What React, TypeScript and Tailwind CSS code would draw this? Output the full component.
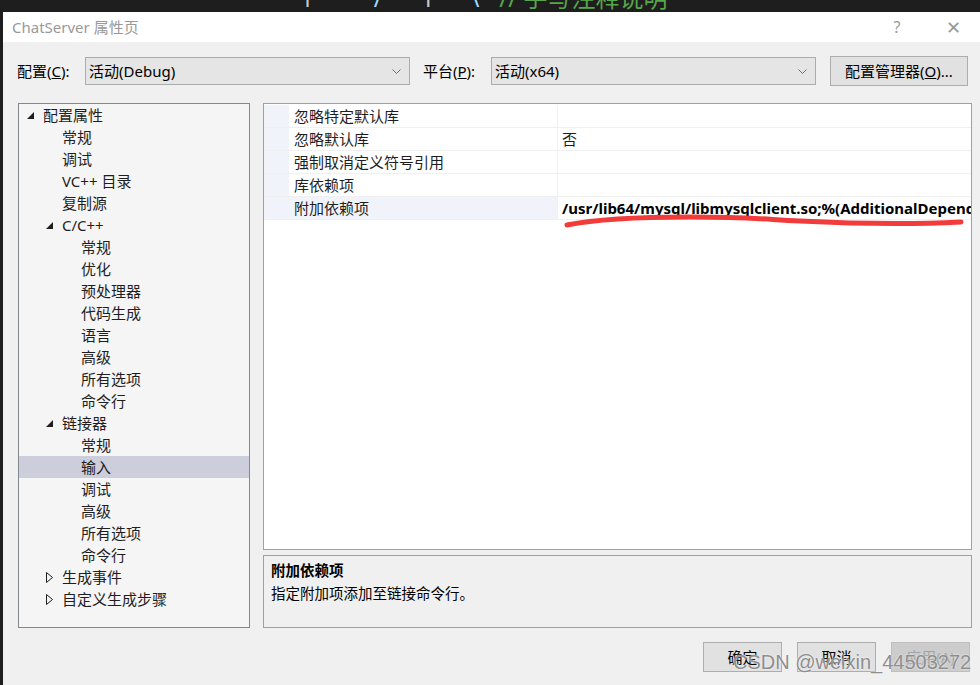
import React from "react";

type Node = { label: string; level: number; kind?: "open" | "closed"; selected?: boolean };

const tree: Node[] = [
  { label: "配置属性", level: 0, kind: "open" },
  { label: "常规", level: 1 },
  { label: "调试", level: 1 },
  { label: "VC++ 目录", level: 1 },
  { label: "复制源", level: 1 },
  { label: "C/C++", level: 1, kind: "open" },
  { label: "常规", level: 2 },
  { label: "优化", level: 2 },
  { label: "预处理器", level: 2 },
  { label: "代码生成", level: 2 },
  { label: "语言", level: 2 },
  { label: "高级", level: 2 },
  { label: "所有选项", level: 2 },
  { label: "命令行", level: 2 },
  { label: "链接器", level: 1, kind: "open" },
  { label: "常规", level: 2 },
  { label: "输入", level: 2, selected: true },
  { label: "调试", level: 2 },
  { label: "高级", level: 2 },
  { label: "所有选项", level: 2 },
  { label: "命令行", level: 2 },
  { label: "生成事件", level: 1, kind: "closed" },
  { label: "自定义生成步骤", level: 1, kind: "closed" },
];

const props = [
  { name: "忽略特定默认库", value: "" },
  { name: "忽略默认库", value: "否" },
  { name: "强制取消定义符号引用", value: "" },
  { name: "库依赖项", value: "" },
  { name: "附加依赖项", value: "/usr/lib64/mysql/libmysqlclient.so;%(AdditionalDependencies)", selected: true },
];

// indent in px for each tree level (triangle box starts here)
const indent = ["pl-[8px]", "pl-[27px]", "pl-[46px]"];

function Chevron() {
  return (
    <svg width="9" height="5" viewBox="0 0 9 5" className="shrink-0">
      <polyline points="0.5,0.5 4.5,4.5 8.5,0.5" fill="none" stroke="#6d6d6d" strokeWidth="1" />
    </svg>
  );
}

function Combo({ text }: { text: string }) {
  return (
    <div className="w-[325px] h-[28px] shrink-0 bg-[#e5e5e5] border border-[#acacac] flex items-center pl-[3px] pr-[8px] text-[15px] text-black">
      <span className="flex-1">{text}</span>
      <Chevron />
    </div>
  );
}

function Triangle({ kind }: { kind?: "open" | "closed" }) {
  if (kind === "open")
    return (
      <svg width="7" height="7" viewBox="0 0 7 7">
        <polygon points="7,0 7,7 0,7" fill="#1e1e1e" />
      </svg>
    );
  if (kind === "closed")
    return (
      <svg width="7" height="11" viewBox="0 0 7 11">
        <polygon points="0.5,0.5 6.5,5.5 0.5,10.5" fill="none" stroke="#1e1e1e" strokeWidth="1" />
      </svg>
    );
  return null;
}

export default function App() {
  return (
    <div className="relative w-[980px] h-[685px] overflow-hidden bg-[#1e1e1e] flex flex-col font-['Noto_Sans','Noto_Sans_CJK_SC',sans-serif]">
      {/* code editor peeking above the dialog */}
      <div className="h-[12px] overflow-hidden shrink-0 flex items-start text-[24px] leading-[24px]">
        <div className="-mt-[14px] flex whitespace-nowrap">
          <span className="ml-[300px] text-[#c8c8c8]">1</span>
          <span className="ml-[60px] text-[#9cdcfe]">/</span>
          <span className="ml-[38px] text-[#c8c8c8]">1</span>
          <span className="ml-[36px] text-[#9cdcfe]">\</span>
          <span className="ml-[20px] text-[#57a64a]">// 手写注释说明</span>
        </div>
      </div>

      <div className="flex flex-1 min-h-0 min-w-0">
        <div className="w-[3px] shrink-0 bg-[#1e1e1e]" />

        <div className="flex-1 min-w-0 flex flex-col bg-[#f0f0f0]">
          {/* title bar */}
          <div className="h-[30px] bg-white flex items-center pl-[9px] text-[15px] text-[#999999] shrink-0">
            <span className="flex-1">ChatServer 属性页</span>
            <span className="w-[20px] text-center mr-[36px] text-[16px]">?</span>
            <span className="w-[20px] text-center mr-[17px] text-[18px] font-light">✕</span>
          </div>

          <div className="flex-1 min-w-0 flex flex-col pl-[15px] pr-[8px] pt-[14px]">
            {/* configuration row */}
            <div className="h-[30px] flex items-center text-[15px] text-black">
              <span className="w-[68px] shrink-0 -ml-[1px]">
                配置(<span className="underline">C</span>):
              </span>
              <Combo text="活动(Debug)" />
              <span className="w-[68px] shrink-0 ml-[13px]">
                平台(<span className="underline">P</span>):
              </span>
              <Combo text="活动(x64)" />
              <button className="ml-[14px] w-[138px] shrink-0 h-[30px] bg-[#e1e1e1] border border-[#adadad] text-[15px]">
                配置管理器(<span className="underline">O</span>)...
              </button>
            </div>

            {/* panels */}
            <div className="mt-[17px] h-[525px] flex gap-[13px] min-w-0">
              <div className="w-[232px] shrink-0 border border-[#828790] bg-[#f5f5f5] text-[15px] text-[#1e1e1e]">
                {tree.map((n, i) => (
                  <div
                    key={i}
                    className={`h-[22px] flex items-center ${indent[n.level]} ${n.selected ? "bg-[#cccedb]" : ""}`}
                  >
                    <span className="w-[16px] shrink-0 flex items-center">
                      <Triangle kind={n.kind} />
                    </span>
                    <span>{n.label}</span>
                  </div>
                ))}
              </div>

              <div className="flex-1 min-w-0 flex flex-col gap-[5px]">
                <div className="h-[447px] overflow-hidden border border-[#a0a0a0] bg-white pt-[1px] text-[15px] text-[#1e1e1e]">
                  {props.map((p, i) => (
                    <div key={i} className="h-[23px] flex border-b border-[#f0f0f0]">
                      <div className="w-[25px] shrink-0 bg-[#f0f4fa]" />
                      <div
                        className={`w-[269px] shrink-0 pl-[5px] flex items-center border-r border-[#f0f0f0] ${p.selected ? "bg-[#f0f4fa]" : ""}`}
                      >
                        {p.name}
                      </div>
                      <div
                        className={`flex-1 min-w-0 overflow-hidden whitespace-nowrap pl-[4px] flex items-center ${p.selected ? "font-bold text-[15px] text-black" : ""}`}
                      >
                        {p.value}
                      </div>
                    </div>
                  ))}
                </div>

                <div className="h-[73px] border border-[#a0a0a0] bg-[#f0f0f0] px-[7px] pt-[3px] text-[14.5px] text-black leading-[23px]">
                  <div className="font-bold">附加依赖项</div>
                  <div>指定附加项添加至链接命令行。</div>
                </div>
              </div>
            </div>

            {/* dialog buttons */}
            <div className="mt-[14px] flex justify-end gap-[15px] pr-[2px] text-[15px]">
              <button className="w-[79px] h-[30px] bg-[#e1e1e1] border border-[#adadad] text-black">确定</button>
              <button className="w-[79px] h-[30px] bg-[#e1e1e1] border border-[#adadad] text-black">取消</button>
              <button className="w-[79px] h-[30px] bg-[#cccccc] border border-[#bfbfbf] text-[#a3a3a3]">应用(A)</button>
            </div>
          </div>
        </div>
      </div>

      {/* red hand-drawn underline annotation */}
      <svg className="absolute left-0 top-0 pointer-events-none" width="980" height="685" viewBox="0 0 980 685">
        <path
          d="M567 225 C 592 220, 630 217, 690 217 S 760 219, 800 221 S 900 225, 961 222"
          fill="none"
          stroke="#f23b3b"
          strokeWidth="5"
          strokeLinecap="round"
        />
      </svg>

      {/* watermark */}
      <div className="absolute left-[733px] top-[647px] text-[20px] text-[#8e8e8e] font-['Liberation_Sans',sans-serif] whitespace-nowrap [text-shadow:0_0_2px_#ffffff]">
        CSDN @weixin_44503272
      </div>
    </div>
  );
}
